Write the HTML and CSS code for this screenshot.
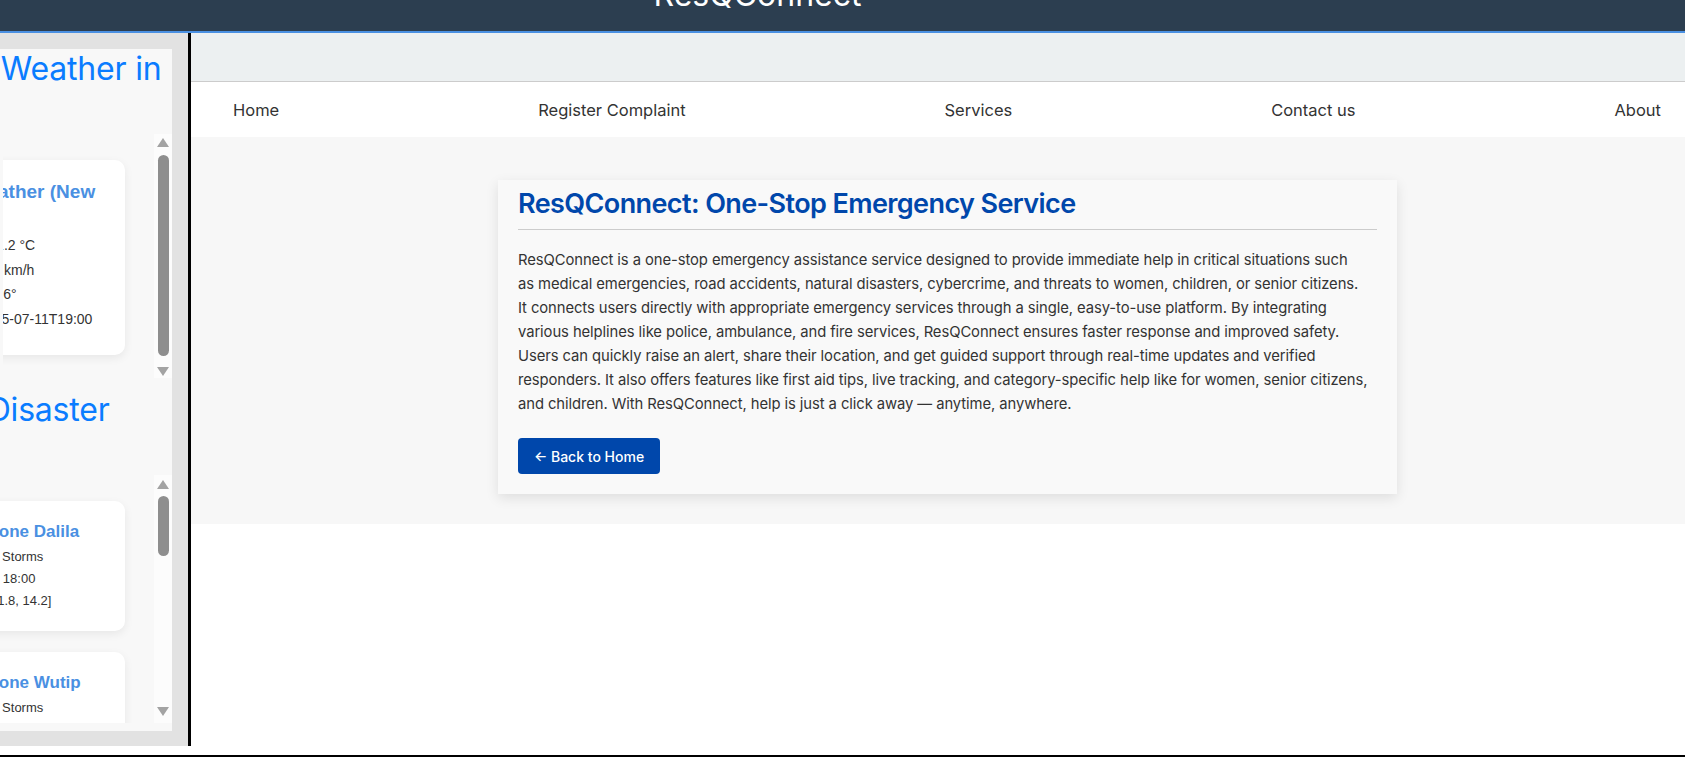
FILE: index.html
```html
<!DOCTYPE html>
<html lang="en">
<head>
<meta charset="utf-8">
<title>ResQConnect – About</title>
<link rel="stylesheet" href="styles.css">
</head>
<body>
<header class="topbar">
  <h1 class="brand">ResQConnect</h1>
</header>
<div class="layout">
  <aside class="sidebar">
    <div class="panel">
      <div class="panel-inner">
        <h2 class="side-title">Current Weather in Delhi</h2>
        <div class="scrollbox box-weather">
          <div class="scroll-content">
            <div class="side-card wx-card">
              <h3>Current Weather (New Delhi)</h3>
              <p><strong>Temperature:</strong> 31.2 °C</p>
              <p><strong>Wind Speed:</strong> 12 km/h</p>
              <p><strong>Wind Direction:</strong> 6°</p>
              <p><strong>Timestamp:</strong> 2025-07-11T19:00</p>
            </div>
          </div>
          <div class="scrollbar">
            <span class="arrow arrow-up"></span>
            <span class="thumb thumb-weather"></span>
            <span class="arrow arrow-down"></span>
          </div>
        </div>
        <h2 class="side-title side-title-2">Recent Disaster Alerts</h2>
        <div class="scrollbox box-disaster">
          <div class="scroll-content">
            <div class="side-card dz-card">
              <h3>Tropical Cyclone Dalila</h3>
              <p><strong>Category:</strong> Severe Storms</p>
              <p><strong>Date:</strong> 2025-06-14&nbsp; 18:00</p>
              <p><strong>Coordinates:</strong> [-111.8, 14.2]</p>
            </div>
            <div class="side-card dz-card">
              <h3>Tropical Cyclone Wutip</h3>
              <p><strong>Category:</strong> Severe Storms</p>
              <p><strong>Date:</strong> 2025-06-11&nbsp; 06:00</p>
              <p><strong>Coordinates:</strong> [111.2, 17.5]</p>
            </div>
          </div>
          <div class="scrollbar">
            <span class="arrow arrow-up"></span>
            <span class="thumb thumb-disaster"></span>
            <span class="arrow arrow-down"></span>
          </div>
        </div>
      </div>
    </div>
  </aside>
  <main class="main">
    <div class="band"></div>
    <nav class="nav">
      <ul class="nav-list">
        <li><a href="#">Home</a></li>
        <li><a href="#">Register Complaint</a></li>
        <li><a href="#">Services</a></li>
        <li><a href="#">Contact us</a></li>
        <li><a href="#">About</a></li>
      </ul>
    </nav>
    <section class="content">
      <article class="about-card">
        <h2 class="about-title">ResQConnect: One-Stop Emergency Service</h2>
        <p class="about-text">ResQConnect is a one-stop emergency assistance service designed to provide immediate help in critical situations such<br>
as medical emergencies, road accidents, natural disasters, cybercrime, and threats to women, children, or senior citizens.<br>
It connects users directly with appropriate emergency services through a single, easy-to-use platform. By integrating<br>
various helplines like police, ambulance, and fire services, ResQConnect ensures faster response and improved safety.<br>
Users can quickly raise an alert, share their location, and get guided support through real-time updates and verified<br>
responders. It also offers features like first aid tips, live tracking, and category-specific help like for women, senior citizens,<br>
and children. With ResQConnect, help is just a click away — anytime, anywhere.</p>
        <a class="back-btn" href="#">← Back to Home</a>
      </article>
    </section>
  </main>
</div>
<footer class="footer"></footer>
</body>
</html>
```

FILE: styles.css
```css
* { box-sizing: border-box; }

html, body {
  margin: 0;
  padding: 0;
  background: #ffffff;
}

body {
  font-family: "Inter", "Noto Sans", sans-serif;
  color: #333;
  overflow: hidden;
  height: 757px;
}

/* ---------- top header ---------- */
.topbar {
  height: 33px;
  background: #2c3e50;
  border-bottom: 2px solid #4a90e2;
  display: flex;
  justify-content: center;
  padding-right: 170px;
  overflow: hidden;
}

.brand {
  margin: -21px 0 0;
  font-size: 32px;
  line-height: 32px;
  font-weight: 400;
  color: #ffffff;
  height: 32px;
}

/* ---------- layout ---------- */
.layout {
  display: flex;
  height: 713px;
  margin-bottom: 9px;
}

.sidebar {
  width: 191px;
  flex: 0 0 191px;
  background: #e2e2e2;
  border-right: 3px solid #000;
  padding: 16px 16px 15px 0;
  display: flex;
}

.panel {
  flex: 1;
  background: #f8f8f8;
  overflow: hidden;
}

.panel-inner {
  margin-left: -130px;
}

.side-title {
  margin: 0;
  padding-left: 9px;
  font-size: 32px;
  line-height: 40px;
  font-weight: 400;
  color: #0a7cff;
  letter-spacing: -0.2px;
}

.side-title-2 {
  margin-top: 12px;
  padding-left: 5px;
}

.scrollbox {
  display: flex;
  margin-top: 5px;
  height: 244px;
}

.box-weather {
  margin-left: 133px;
}

.box-disaster {
  height: 248px;
}

.scroll-content {
  flex: 1;
  overflow: hidden;
  padding: 26px 29px 0 3px;
}

.box-weather .scroll-content {
  padding-left: 0;
}

.box-weather .side-card {
  margin-left: -127px;
}

.side-card {
  background: #ffffff;
  border-radius: 10px;
  box-shadow: 0 3px 10px rgba(0, 0, 0, 0.07);
  font-family: "Liberation Sans", Arial, sans-serif;
  color: #333;
}

.side-card h3 {
  margin: 0;
  color: #4a90e2;
  font-weight: 700;
}

.side-card p {
  margin: 0;
  white-space: nowrap;
}

.wx-card {
  padding: 21px 20px 24px;
}

.wx-card h3 {
  font-size: 19px;
  line-height: 22px;
  margin-bottom: 8px;
}

.wx-card p {
  font-size: 14px;
  line-height: 24.5px;
}

.dz-card {
  padding: 21px 20px 19px;
  margin-bottom: 21px;
}

.dz-card h3 {
  font-size: 17px;
  line-height: 20px;
  margin-bottom: 4px;
  white-space: nowrap;
}

.dz-card p {
  font-size: 13px;
  line-height: 22px;
}

/* fake scrollbar */
.scrollbar {
  flex: 0 0 18px;
  width: 18px;
  background: #fcfcfc;
  display: flex;
  flex-direction: column;
  align-items: center;
  padding: 4px 0 2px;
}

.arrow {
  display: block;
  width: 0;
  height: 0;
  border-left: 6px solid transparent;
  border-right: 6px solid transparent;
}

.arrow-up {
  border-bottom: 9px solid #a3a3a3;
}

.arrow-down {
  border-top: 9px solid #a3a3a3;
  margin-top: auto;
}

.thumb {
  display: block;
  width: 11px;
  border-radius: 6px;
  background: #8e8e8e;
  margin-top: 8px;
}

.thumb-weather { height: 201px; }
.thumb-disaster { height: 60px; }

.box-disaster .scrollbar { padding-top: 5px; }
.box-disaster .thumb { margin-top: 7px; }
.box-disaster .arrow-down { margin-bottom: 5px; }

/* ---------- main ---------- */
.main {
  flex: 1;
  display: flex;
  flex-direction: column;
  background: #ffffff;
}

.band {
  height: 49px;
  background: #ecf0f1;
  border-bottom: 1px solid #cccccc;
}

.nav {
  height: 55px;
  background: #ffffff;
}

.nav-list {
  list-style: none;
  margin: 0;
  height: 100%;
  padding: 0 24px 0 42px;
  display: flex;
  justify-content: space-between;
  align-items: center;
}

.nav-list a {
  color: #333;
  text-decoration: none;
  font-size: 16.5px;
}

.content {
  background: #f7f7f7;
  padding: 43px 0 30px 19px;
}

.about-card {
  width: 899px;
  margin: 0 auto;
  background: #f9f9f9;
  padding: 7px 20px 20px;
  box-shadow: 0 4px 12px rgba(0, 0, 0, 0.1);
}

.about-title {
  margin: 0;
  padding-bottom: 8px;
  border-bottom: 1px solid #cccccc;
  font-size: 27px;
  line-height: 34px;
  font-weight: 600;
  color: #0047ab;
  letter-spacing: -0.6px;
}

.about-text {
  margin: 18px 0 22px;
  font-size: 14.8px;
  line-height: 24px;
  letter-spacing: -0.08px;
  white-space: nowrap;
  color: #333;
}

.back-btn {
  display: inline-flex;
  align-items: center;
  justify-content: center;
  height: 36px;
  width: 142px;
  background: #0047ab;
  color: #ffffff;
  text-decoration: none;
  font-size: 14px;
  font-weight: 500;
  border-radius: 4px;
}

.footer {
  border-top: 2px solid #000;
  height: 10px;
}
```
